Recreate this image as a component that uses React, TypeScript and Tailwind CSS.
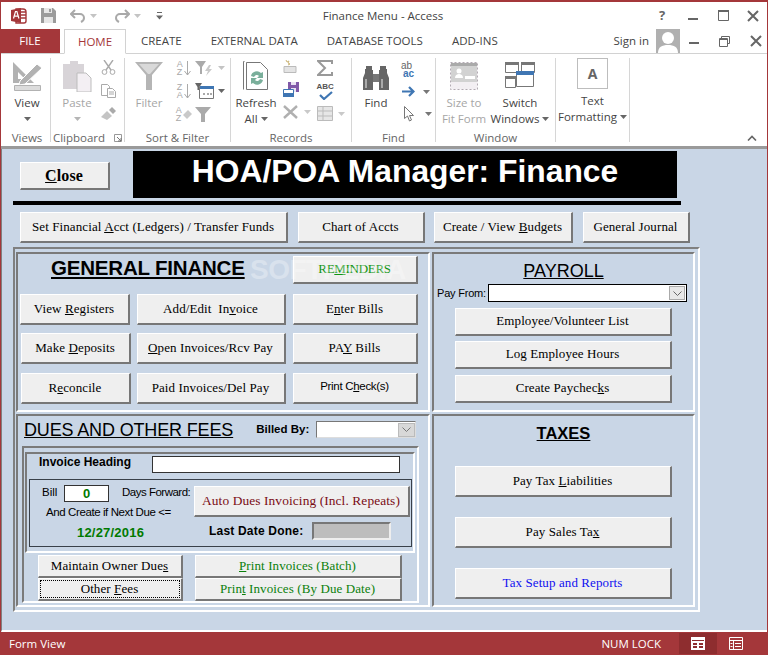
import React from "react";

const ui = "[font-family:'Open_Sans','Noto_Sans',sans-serif]";
const serif = "[font-family:'Liberation_Serif',serif]";
const arial = "[font-family:'Liberation_Sans',Arial,sans-serif]";

function Caret({ color = "#777", className = "" }: { color?: string; className?: string }) {
  return (
    <svg width="7" height="4" viewBox="0 0 7 4" className={className}>
      <path d="M0 0h7L3.5 4z" fill={color} />
    </svg>
  );
}

function Btn({ className = "", children, text = "text-black" }: { className?: string; children: React.ReactNode; text?: string }) {
  return (
    <div className={`flex items-center justify-center shrink-0 pb-[2px] pr-[1px] bg-[#efefef] border-t border-l border-t-white border-l-white border-r-2 border-b-2 border-r-[#777] border-b-[#777] text-[13px] tracking-[0.1px] leading-none whitespace-pre ${serif} ${text} ${className}`}>
      {children}
    </div>
  );
}

function Panel({ className = "", children }: { className?: string; children: React.ReactNode }) {
  return <div className={`relative border-t-2 border-l-2 border-t-[#7a7a7a] border-l-[#7a7a7a] border-r-2 border-b-2 border-r-white border-b-white ${className}`}>{children}</div>;
}

function Group({ w, label, children, extra }: { w: string; label: string; children: React.ReactNode; extra?: React.ReactNode }) {
  return (
    <div className={`${w} h-[84px] shrink-0 flex flex-col border-r border-r-[#d6d6d6]`}>
      <div className="flex-1 flex min-h-0">{children}</div>
      <div className="h-[8px] shrink-0 flex items-center justify-center gap-[9px] text-[11.5px] text-[#666] leading-none">
        <span>{label}</span>
        {extra}
      </div>
    </div>
  );
}

function Big({ icon, lines, dim, caret, w = "w-full" }: { icon: React.ReactNode; lines: React.ReactNode[]; dim?: boolean; caret?: boolean; w?: string }) {
  return (
    <div className={`${w} shrink-0 flex flex-col items-center ${dim ? "text-[#a6a6a6]" : "text-[#444]"} text-[11.5px] leading-[16px]`}>
      <div className="h-[37px] shrink-0 flex items-start justify-center">{icon}</div>
      {lines.map((l, i) => (
        <div key={i} className="whitespace-nowrap flex items-center gap-[3px]">{l}</div>
      ))}
      {caret && <Caret color={dim ? "#b5b5b5" : "#666"} className="mt-[6px]" />}
    </div>
  );
}

const CtlX = () => (
  <svg width="12" height="12" viewBox="0 0 12 12"><path d="M1 1l10 10M11 1L1 11" stroke="#666" strokeWidth="2" /></svg>
);

export default function App() {
  return (
    <div className={`w-[768px] h-[655px] overflow-hidden bg-white flex flex-col border-x border-t-2 border-[#a4373a] ${ui}`}>
      {/* title row */}
      <div className="h-[27px] shrink-0 flex items-center relative">
        <svg width="17" height="17" viewBox="0 0 17 17" className="ml-[10px]">
          <path d="M5 2h7a3 3 0 0 1 3 3v9a2 2 0 0 1-2 2H5z" fill="#fff" stroke="#a4373a" strokeWidth="1.4" />
          <path d="M10 5h5M10 8h5M10 11h5" stroke="#a4373a" strokeWidth="1.4" />
          <path d="M0 3l10-2v15L0 14z" fill="#a4373a" />
          <path d="M2.5 11.5l2-7h1.4l2 7M3.4 9.2h3.6" stroke="#fff" strokeWidth="1.2" fill="none" />
        </svg>
        <svg width="15" height="15" viewBox="0 0 15 15" className="ml-[13px]">
          <path d="M0 0h12l3 3v12H0z" fill="#9b9b9b" />
          <path d="M3 0h8v5H3z" fill="#e6e6e6" />
          <path d="M3 9h9v6H3z" fill="#e6e6e6" />
          <path d="M8 1h2v3H8z" fill="#9b9b9b" />
        </svg>
        <svg width="16" height="14" viewBox="0 0 16 14" className="ml-[14px]">
          <path d="M5 1L1 5l4 4" stroke="#a9a9a9" strokeWidth="2" fill="none" />
          <path d="M1 5h9a4 4 0 0 1 4 4c0 2-1 3-3 4" stroke="#a9a9a9" strokeWidth="2" fill="none" />
        </svg>
        <Caret color="#c4c4c4" className="ml-[4px]" />
        <svg width="16" height="14" viewBox="0 0 16 14" className="ml-[17px]">
          <path d="M11 1l4 4-4 4" stroke="#a9a9a9" strokeWidth="2" fill="none" />
          <path d="M15 5H6a4 4 0 0 0-4 4c0 2 1 3 3 4" stroke="#a9a9a9" strokeWidth="2" fill="none" />
        </svg>
        <Caret color="#c4c4c4" className="ml-[4px]" />
        <svg width="7" height="8" viewBox="0 0 7 8" className="ml-[15px]">
          <path d="M1 0h5v1H1z" fill="#666" /><path d="M0 3.5h7L3.5 7.5z" fill="#666" />
        </svg>
        <div className="flex-1 flex justify-center pl-[8px] pr-[180px] text-[11.5px] text-[#444]">
          <span className="ml-[8px]">Finance Menu - Access</span>
        </div>
        <div className="absolute left-[658px] top-[4px] text-[13px] font-bold text-[#666] leading-[18px]">?</div>
        <svg width="10" height="2" viewBox="0 0 10 2" className="absolute left-[687px] top-[16px]"><path d="M0 0h10v2H0z" fill="#666" /></svg>
        <svg width="11" height="11" viewBox="0 0 11 11" className="absolute left-[717px] top-[8px]"><path d="M.5 .5h10v10H.5z" fill="none" stroke="#666" /><path d="M0 0h11v2H0z" fill="#666" /></svg>
        <div className="absolute left-[746px] top-[8px]"><CtlX /></div>
      </div>
      {/* tabs row */}
      <div className="h-[25px] shrink-0 flex items-stretch relative border-b border-b-[#d2d2d2] text-[11.5px] text-[#444] -ml-px">
        <div className="w-[60px] bg-[#a4373a] text-white flex items-center justify-center">FILE</div>
        <div className="w-[62px] ml-[4px] h-[25px] bg-white border border-[#d2d2d2] border-b-white flex items-center justify-center text-[#a4373a]">HOME</div>
        <div className="ml-[15px] flex items-center">CREATE</div>
        <div className="ml-[29px] flex items-center">EXTERNAL DATA</div>
        <div className="ml-[29px] flex items-center">DATABASE TOOLS</div>
        <div className="ml-[29px] flex items-center">ADD-INS</div>
        <div className="ml-auto flex items-center">Sign in</div>
        <div className="w-[24px] h-[24px] ml-[7px] bg-[#b0b0b0] overflow-hidden">
          <svg width="24" height="24" viewBox="0 0 24 24"><circle cx="12" cy="9" r="6" fill="#fff" /><path d="M2 24c0-6 4-8 10-8s10 2 10 8z" fill="#fff" /></svg>
        </div>
        <div className="w-[87px] flex items-center pl-[9px] gap-[20px]">
          <svg width="10" height="2" viewBox="0 0 10 2" className="mt-[4px]"><path d="M0 0h10v2H0z" fill="#666" /></svg>
          <svg width="11" height="11" viewBox="0 0 11 11"><path d="M2.5 2.5v-2h8v7h-2" fill="none" stroke="#666" /><path d="M.5 2.5h8v8h-8z" fill="none" stroke="#666" /><path d="M1 3h7v1H1z" fill="#666" /></svg>
          <CtlX />
        </div>
      </div>
      {/* ribbon */}
      <div className="h-[95px] shrink-0 flex pt-[4px] pl-[3px] relative border-b-[3px] border-b-[#9a9a9a] text-[11.5px]">
        <Group w="w-[47px]" label="Views">
          <Big
            lines={["View"]}
            caret
            icon={
              <svg width="32" height="31" viewBox="0 0 32 31" className="mt-[3px]">
                <path d="M2 1v21l21 0zM7 11l0 7 7 0z" fill="#b2b2b2" fillRule="evenodd" />
                <path d="M9 20L26 3l5 4-17 16-6 1z" fill="#b2b2b2" stroke="#fff" />
                <path d="M3.500 24.500h26v5h-26z" fill="#dcdcdc" stroke="#b2b2b2" />
              </svg>
            }
          />
        </Group>
        <Group
          w="w-[74px]"
          label="Clipboard"
          extra={
            <svg width="8" height="8" viewBox="0 0 8 8"><path d="M.5 .5h7v7h-7z" fill="none" stroke="#999" /><path d="M3 3l4 4M7 4v3H4" stroke="#777" fill="none" /></svg>
          }
        >
          <Big
            w="w-[52px]"
            dim
            lines={["Paste"]}
            caret
            icon={
              <svg width="30" height="32" viewBox="0 0 30 32" className="mt-[2px]">
                <path d="M1 4h7V1h8v3h6v25H1z" fill="#d8d4d8" />
                <path d="M15 13h9l5 5v14H15z" fill="#f3eff3" stroke="#bdbdbd" />
              </svg>
            }
          />
          <div className="flex flex-col items-start w-[20px] -ml-[2px] pt-[2px] gap-[9px]">
            <svg width="15" height="15" viewBox="0 0 15 15"><path d="M3 0l7 10M12 0L5 10" stroke="#aaa" strokeWidth="1.4" /><circle cx="3.5" cy="12" r="2.4" fill="none" stroke="#aaa" /><circle cx="11.5" cy="12" r="2.4" fill="none" stroke="#aaa" /></svg>
            <svg width="15" height="14" viewBox="0 0 15 14"><path d="M.5 .5h6l2 2v9h-8z" fill="#fff" stroke="#aaa" /><path d="M6.5 4.5h5l3 3v6h-8z" fill="#fff" stroke="#aaa" /><path d="M8 8h5M8 10h5" stroke="#aaa" /></svg>
            <svg width="15" height="14" viewBox="0 0 15 14"><path d="M0 10l6-6 5 5-5 4z" fill="#c4c4c4" /><path d="M8 3l3-3 4 4-3 3z" fill="#aaa" /></svg>
          </div>
        </Group>
        <Group w="w-[106px]" label="Sort & Filter">
          <Big
            w="w-[48px]"
            dim
            lines={["Filter"]}
            icon={
              <svg width="28" height="28" viewBox="0 0 28 28" className="mt-[4px]"><path d="M0 0h28L17 13v15h-6V13z" fill="#b5b5b5" /><path d="M4 2h20l-9 10h-2z" fill="#d9d9d9" /></svg>
            }
          />
          <div className="flex flex-col items-center w-[18px] ml-[2px] pt-[2px] gap-[7px]">
            {["AZ", "ZA", "AZ"].map((t, i) => (
              <div key={i} className="h-[16px] flex items-center gap-[1px]">
                <div className={`flex flex-col text-[9px] leading-[8px] text-[#a8a8a8] ${arial}`}><span>{t[0]}</span><span>{t[1]}</span></div>
                {i < 2 ? (
                  <svg width="7" height="15" viewBox="0 0 7 15"><path d="M3.5 0v14M.5 10l3 4 3-4" stroke="#aaa" fill="none" /></svg>
                ) : (
                  <svg width="9" height="9" viewBox="0 0 9 9"><path d="M0 5l5-5 4 4-5 5z" fill="#c9c9c9" /></svg>
                )}
              </div>
            ))}
          </div>
          <div className="flex flex-col w-[36px] ml-[3px] pt-[2px] gap-[7px]">
            <div className="h-[16px] flex items-center gap-[4px]">
              <svg width="19" height="15" viewBox="0 0 19 15"><path d="M0 0h11L7 6v7H5V6z" fill="#aaa" /><path d="M14 4l-4 6h3l-2 5 6-7h-3l2-4z" fill="#c9c9c9" /></svg>
              <Caret color="#c4c4c4" />
            </div>
            <div className="h-[16px] flex items-center gap-[4px]">
              <svg width="19" height="16" viewBox="0 0 19 16"><path d="M0 0h7L4.500 4v3h-2V4z" fill="#666" /><path d="M4.500 3.500h14v12h-14z" fill="#fff" stroke="#777" /><path d="M5 3h14v3H5z" fill="#3f76b3" /><path d="M8 11h2M12 11h2M15 11h2" stroke="#555" /></svg>
              <Caret color="#666" />
            </div>
            <svg width="16" height="15" viewBox="0 0 16 15" className="mt-[1px]"><path d="M0 0h16L10 7v8H6V7z" fill="#aaa" /></svg>
          </div>
        </Group>
        <Group w="w-[121px]" label="Records">
          <Big
            w="w-[50px]"
            lines={["Refresh", <>All <Caret color="#666" /></>]}
            icon={
              <svg width="26" height="30" viewBox="0 0 26 30" className="mt-[3px]">
                <path d="M.5 .5v28M.5 .5h1" stroke="#777" fill="none" />
                <path d="M3.500 1.500h14l7 7v20h-21z" fill="#fff" stroke="#777" />
                <path d="M8 15a6 6 0 0 1 10-3l2-1v6h-6l2-2a3 3 0 0 0-5 1z" fill="#7aaf9b" />
                <path d="M20 19a6 6 0 0 1-10 3l-2 1v-6h6l-2 2a3 3 0 0 0 5-1z" fill="#7aaf9b" />
              </svg>
            }
          />
          <div className="flex flex-col w-[34px] pl-[1px] pt-[2px] gap-[8px] ml-[1px]">
            <svg width="14" height="14" viewBox="0 0 14 14"><path d="M1 6.500h12v6H1z" fill="#e4e4e4" stroke="#bbb" /><path d="M3 0l1 2 2-1-1 2 2 1-2 1" stroke="#ccb678" fill="none" /></svg>
            <svg width="16" height="15" viewBox="0 0 16 15"><path d="M5 0h11v10H5z" fill="#8059a8" /><path d="M8 0h5v3H8zM8 6h5v4H8z" fill="#e9e2f2" /><path d="M.5 7.500h10v7H.5z" fill="#fff" stroke="#3f76b3" /><path d="M0 11h11v4H0z" fill="#3f76b3" /></svg>
            <div className="flex items-center gap-[6px]">
              <svg width="15" height="14" viewBox="0 0 15 14"><path d="M1 1l13 12M14 1L1 13" stroke="#b0b0b0" strokeWidth="2.4" /></svg>
              <Caret color="#c9c9c9" />
            </div>
          </div>
          <div className="flex flex-col w-[35px] pt-[2px] gap-[6px] ml-[1px]">
            <svg width="16" height="16" viewBox="0 0 16 16"><path d="M15 4V1H1l7 7-7 7h14v-3" fill="none" stroke="#999" strokeWidth="2" /></svg>
            <div className="h-[17px] relative w-[17px]">
              <div className={`absolute left-0 top-0 text-[8px] font-bold leading-[9px] text-[#555] ${arial}`}>ABC</div>
              <svg width="14" height="9" viewBox="0 0 14 9" className="absolute left-[2px] top-[9px]"><path d="M1 4l4 4 8-7" stroke="#3f76b3" strokeWidth="2.2" fill="none" /></svg>
            </div>
            <div className="flex items-center gap-[5px] mt-[1px]">
              <svg width="16" height="15" viewBox="0 0 16 15"><path d="M.5 .5h15v14H.5z" fill="#e6e6e6" stroke="#bbb" /><path d="M0 5h16M0 10h16M6 0v15" stroke="#bbb" /></svg>
              <Caret color="#c9c9c9" />
            </div>
          </div>
        </Group>
        <Group w="w-[84px]" label="Find">
          <Big
            w="w-[48px]"
            lines={["Find"]}
            icon={
              <svg width="28" height="24" viewBox="0 0 28 24" className="mt-[8px]">
                <path d="M4 0h6v4h1v20H1V12l2-5V3h1zM18 0h6v3h1v4l2 5v12H17V4h1z" fill="#666" />
                <path d="M11 8h6v8h-6z" fill="#777" />
                <path d="M3 13h2v9H3zM19 13h2v9h-2z" fill="#aaa" />
              </svg>
            }
          />
          <div className="flex flex-col w-[34px] pl-[1px] pt-[4px]">
            <div className={`h-[17px] text-[10px] leading-[8px] font-bold text-[#3f76b3] ${arial}`}>
              <div className="text-[#666] font-normal">ab</div>
              <div className="ml-[2px]">ac</div>
            </div>
            <div className="flex items-center gap-[8px] mt-[7px] ml-[1px]">
              <svg width="13" height="11" viewBox="0 0 13 11"><path d="M0 5.500h11M7 1l4.500 4.500L7 10" stroke="#3f76b3" strokeWidth="2.2" fill="none" /></svg>
              <Caret color="#777" />
            </div>
            <div className="flex items-center gap-[8px] mt-[9px] ml-[3px]">
              <svg width="10" height="16" viewBox="0 0 10 16"><path d="M.5 .5v12l3-2.500 2 5 2-1-2-4.500h4z" fill="#fff" stroke="#777" /></svg>
              <Caret color="#777" className="ml-[3px]" />
            </div>
          </div>
        </Group>
        <Group w="w-[120px]" label="Window">
          <Big
            w="w-[56px]"
            dim
            lines={["Size to", "Fit Form"]}
            icon={
              <svg width="28" height="28" viewBox="0 0 28 28" className="mt-[4px]">
                <path d="M.5 .5h27v27H.5z" fill="#f3eff3" stroke="#b3aab3" strokeDasharray="2 2" />
                <path d="M1 1h26v19H1z" fill="#d2d2d2" />
                <path d="M1 1h26v3H1z" fill="#aaa" />
                <circle cx="9" cy="9" r="2.500" fill="#fff" />
                <path d="M5 16c0-3 2-4 4-4s4 1 4 4z" fill="#fff" />
                <path d="M15 14h10v3H15z" fill="#fff" />
              </svg>
            }
          />
          <Big
            w="w-[56px]"
            lines={["Switch", <>Windows <Caret color="#666" /></>]}
            icon={
              <svg width="30" height="26" viewBox="0 0 30 26" className="mt-[4px]">
                <path d="M.5 .5h13v10H.5zM16.500 .5h13v10h-13zM.5 14.500h10v11H.5z" fill="#fff" stroke="#777" />
                <path d="M0 0h14v3H0zM16 0h14v3H16zM0 14h11v3H0z" fill="#777" />
                <path d="M11.500 9.500h17v15h-17z" fill="#fff" stroke="#777" />
                <path d="M11 9h18v4H11z" fill="#3f76b3" />
              </svg>
            }
          />
        </Group>
        <Group w="w-[74px]" label="">
          <div className="w-full flex flex-col items-center text-[#444] leading-[16px]">
            <div className="w-[31px] h-[31px] border border-[#bdbdbd] flex items-center justify-center font-bold text-[14px] text-[#666] mb-[4px]">A</div>
            <div>Text</div>
            <div className="flex items-center gap-[3px]">Formatting <Caret color="#666" /></div>
          </div>
        </Group>
        <svg width="10" height="6" viewBox="0 0 10 6" className="absolute left-[746px] top-[81px]"><path d="M1 5.500l4-4 4 4" stroke="#666" strokeWidth="1.600" fill="none" /></svg>
      </div>
      {/* form area */}
      <div className="flex-1 min-h-0 bg-[#c9d6e6] border-l border-l-[#808080] border-b-2 border-b-white pt-[2px] flex flex-col">
        <div className="flex items-start pl-[18px]">
          <Btn className="w-[90px] h-[28px] mt-[11px] !text-[16px] font-bold !pb-0"><span><u>C</u>lose</span></Btn>
          <div className={`w-[544px] h-[47px] ml-[23px] bg-black text-white flex items-center justify-center text-[31.8px] font-bold leading-none pb-[5px] ${arial}`}>
            HOA/POA Manager: Finance
          </div>
        </div>
        <div className="w-[668px] h-[4px] bg-black ml-[11px] mt-[3px]" />
        <div className="flex pl-[18px] mt-[7px]">
          <Btn className="w-[268px] h-[31px]"><span>Set Financial <u>A</u>cct (Ledgers) / Transfer Funds</span></Btn>
          <Btn className="w-[127px] h-[31px] ml-[10px]">Chart of Accts</Btn>
          <Btn className="w-[139px] h-[31px] ml-[9px]"><span>Create / View <u>B</u>udgets</span></Btn>
          <Btn className="w-[107px] h-[31px] ml-[10px]">General Journal</Btn>
        </div>
        <div className="w-[687px] h-[365px] ml-[11px] mt-[4px] border-t-2 border-l-2 border-t-[#808080] border-l-[#808080] border-r-2 border-b-2 border-r-white border-b-white pl-[1px] pt-[3px] grid grid-cols-[414px_263px] grid-rows-[160px_193px] gap-[2px]">
          {/* General Finance */}
          <Panel className="overflow-hidden">
            <div className="flex items-start pl-[33px] pt-[2px] pr-[10px]">
              <div className={`text-[20.5px] font-bold underline leading-[24px] whitespace-nowrap [letter-spacing:-0.2px] ${arial}`}>GENERAL FINANCE</div>
              <Btn className="w-[125px] h-[28px] ml-auto !tracking-[-0.3px]" text="text-[#129512]"><span>RE<u>M</u>INDERS</span></Btn>
            </div>
            <div className="flex ml-[2px] mt-[10px] gap-[7px]">
              <Btn className="w-[110px] h-[31px]"><span>View <u>R</u>egisters</span></Btn>
              <Btn className="w-[149px] h-[31px]"><span>Add/Edit  In<u>v</u>oice</span></Btn>
              <Btn className="w-[125px] h-[31px]"><span>E<u>n</u>ter Bills</span></Btn>
            </div>
            <div className="flex ml-[3px] mt-[8px] gap-[6px]">
              <Btn className="w-[110px] h-[31px]"><span>Make <u>D</u>eposits</span></Btn>
              <Btn className="w-[149px] h-[31px]"><span><u>O</u>pen Invoices/Rcv Pay</span></Btn>
              <Btn className="w-[125px] h-[31px] ml-[1px]"><span>PA<u>Y</u> Bills</span></Btn>
            </div>
            <div className="flex ml-[3px] mt-[9px] gap-[6px]">
              <Btn className="w-[110px] h-[31px]"><span>R<u>e</u>concile</span></Btn>
              <Btn className="w-[149px] h-[31px]">Paid Invoices/Del Pay</Btn>
              <Btn className="w-[125px] h-[31px] ml-[1px]"><span className={`text-[11.5px] tracking-[-0.3px] ${arial}`}>Print C<u>h</u>eck(s)</span></Btn>
            </div>
            <div className={`absolute left-[232px] top-[2px] text-[28px] leading-[28px] font-bold text-white opacity-30 pointer-events-none tracking-[-0.5px] ${arial}`}>SOFTPEDIA</div>
          </Panel>
          {/* Payroll */}
          <Panel>
            <div className={`text-center text-[18px] underline leading-[22px] mt-[6px] ${arial}`}>PAYROLL</div>
            <div className="flex items-center mt-[2px] ml-[3px]">
              <span className={`text-[11px] w-[51px] whitespace-nowrap tracking-[-0.2px] ${arial}`}>Pay From:</span>
              <div className="w-[199px] h-[18px] bg-white border border-black flex justify-end items-center">
                <div className="w-[16px] h-[14px] bg-[#e8e8e8] border border-[#aaa] flex items-center justify-center mr-px">
                  <svg width="9" height="5" viewBox="0 0 9 5"><path d="M.5 .5l4 4 4-4" stroke="#666" fill="none" /></svg>
                </div>
              </div>
            </div>
            <div className="flex flex-col items-center mt-[6px]">
              <Btn className="w-[217px] h-[28px]">Employee/Volunteer List</Btn>
              <Btn className="w-[217px] h-[28px] mt-[5px]">Log Employee Hours</Btn>
              <Btn className="w-[217px] h-[28px] mt-[6px]"><span>Create Paychec<u>k</u>s</span></Btn>
            </div>
          </Panel>
          {/* Dues */}
          <Panel>
            <div className="flex items-start pl-[6px] pt-[4px]">
              <div className={`text-[18px] underline leading-[20px] whitespace-nowrap tracking-[-0.15px] ${arial}`}>DUES AND OTHER FEES</div>
              <div className={`ml-[23px] mt-[2px] text-[11.5px] font-bold leading-[15px] whitespace-nowrap ${arial}`}>Billed By:</div>
              <div className="w-[100px] h-[17px] ml-[7px] mt-px bg-white border border-t-[#777] border-l-[#777] border-r-[#ddd] border-b-[#ddd] flex justify-end items-center">
                <div className="w-[17px] h-[14px] bg-[#d8d8d8] border border-[#bbb] flex items-center justify-center">
                  <svg width="9" height="5" viewBox="0 0 9 5"><path d="M.5 .5l4 4 4-4" stroke="#777" fill="none" /></svg>
                </div>
              </div>
            </div>
            <Panel className="w-[397px] h-[157px] ml-[4px] mt-[6px]">
              <Panel className="w-[390px] h-[101px] ml-px mt-[4px]">
                <div className="flex items-start mt-[2px] h-[17px]">
                  <div className={`w-[111px] ml-[12px] text-[12px] font-bold leading-[12px] whitespace-nowrap ${arial}`}>Invoice Heading</div>
                  <div className="w-[248px] h-[17px] ml-[2px] bg-white border border-[#333]" />
                </div>
                <div className="w-[383px] h-[68px] ml-[2px] mt-[6px] border border-[#39404a] flex">
                  <div className={`w-[164px] shrink-0 text-[11.5px] leading-[14px] ${arial}`}>
                    <div className="flex items-start mt-[5px] h-[17px]">
                      <span className="ml-[12px] w-[22px]">Bill</span>
                      <div className="w-[45px] h-[17px] bg-white border border-[#333] text-center text-[13px] font-bold leading-[15px] text-[#007a00]">0</div>
                      <span className="ml-[13px] whitespace-nowrap tracking-[-0.5px]">Days Forward:</span>
                    </div>
                    <div className="ml-[16px] mt-[3px] whitespace-nowrap tracking-[-0.4px]">And Create if Next Due &lt;=</div>
                    <div className="ml-[47px] mt-[6px] text-[13px] font-bold leading-[16px] text-[#007a00] tracking-[0.2px]">12/27/2016</div>
                  </div>
                  <div className="flex-1 flex flex-col">
                    <Btn className="w-[216px] h-[31px] mt-[6px] !pb-0" text="text-[#7a0c14]"><span className="text-[13.4px]">Auto Dues Invoicing (Incl. Repeats)</span></Btn>
                    <div className="flex items-center mt-[5px] ml-[15px]">
                      <span className={`w-[103px] text-[12px] font-bold tracking-[0.2px] whitespace-nowrap ${arial}`}>Last Date Done:</span>
                      <div className="w-[79px] h-[18px] bg-[#bdbdbd] border-2 border-t-[#777] border-l-[#777] border-r-[#eee] border-b-[#eee]" />
                    </div>
                  </div>
                </div>
              </Panel>
              <div className="flex ml-[14px] mt-[2px]">
                <div className="flex flex-col">
                  <Btn className="w-[145px] h-[23px]"><span>Maintain Owner Due<u>s</u></span></Btn>
                  <Btn className="w-[145px] h-[23px] relative"><span>Other <u>F</u>ees</span><div className="absolute inset-[1px] border border-dotted border-black" /></Btn>
                </div>
                <div className="flex flex-col ml-[12px]">
                  <Btn className="w-[207px] h-[23px]" text="text-[#0b800b]"><span><u>P</u>rint Invoices (Batch)</span></Btn>
                  <Btn className="w-[207px] h-[23px]" text="text-[#0b800b]"><span>Prin<u>t</u> Invoices (By Due Date)</span></Btn>
                </div>
              </div>
            </Panel>
          </Panel>
          {/* Taxes */}
          <Panel>
            <div className={`text-center text-[16.5px] font-bold underline leading-[20px] mt-[7px] ${arial}`}>TAXES</div>
            <div className="flex flex-col items-center mt-[23px] gap-[20px]">
              <Btn className="w-[217px] h-[31px]"><span>Pay Tax <u>L</u>iabilities</span></Btn>
              <Btn className="w-[217px] h-[31px]"><span>Pay Sales Ta<u>x</u></span></Btn>
              <Btn className="w-[217px] h-[31px]" text="text-[#1010f0]">Tax Setup and Reports</Btn>
            </div>
          </Panel>
        </div>
      </div>
      {/* status */}
      <div className="h-[23px] shrink-0 -mx-px bg-[#a4373a] text-white text-[11.5px] flex items-center pl-[9px]">
        <span>Form View</span>
        <span className="ml-auto">NUM LOCK</span>
        <div className="w-[38px] h-[21px] ml-[18px] bg-[#8e2d2f] flex items-center justify-center">
          <svg width="14" height="13" viewBox="0 0 14 13"><path d="M0 0h14v13H0z" fill="#fff" /><path d="M1 3h12v1H1zM2 6h4v2H2zM8 6h4v2H8zM2 9h4v2H2zM8 9h4v2H8z" fill="#8e2d2f" /></svg>
        </div>
        <div className="w-[38px] h-[21px] flex items-center justify-center mr-[13px]">
          <svg width="14" height="13" viewBox="0 0 14 13"><path d="M.5 .5h13v12H.5zM0 3.500h14M4.500 3v10M6 6.500h6M6 9.500h6M1.500 6.500h2M1.500 9.500h2" fill="none" stroke="#fff" /></svg>
        </div>
      </div>
    </div>
  );
}
